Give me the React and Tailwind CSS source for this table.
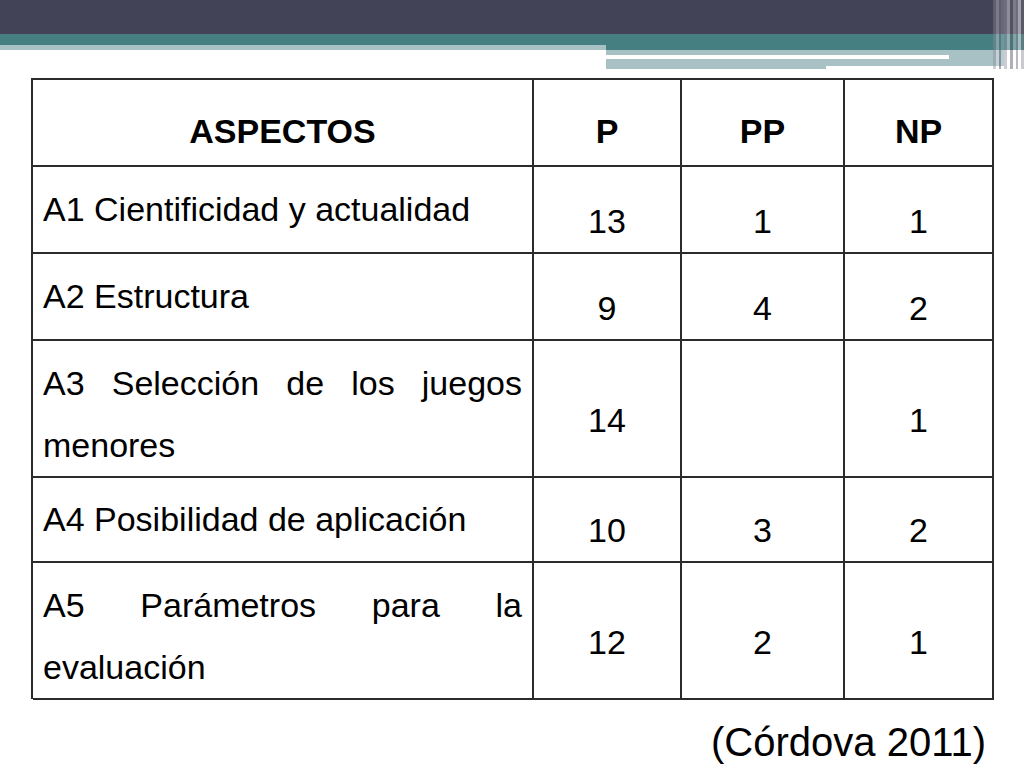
import React from 'react';

const rows = [
  { aspect: 'A1 Cientificidad y actualidad', p: '13', pp: '1', np: '1', h: 'h-[87px]' },
  { aspect: 'A2 Estructura', p: '9', pp: '4', np: '2', h: 'h-[87px]' },
  { aspect: 'A3 Selección de los juegos menores', p: '14', pp: '', np: '1', h: 'h-[136px]' },
  { aspect: 'A4 Posibilidad de aplicación', p: '10', pp: '3', np: '2', h: 'h-[86px]' },
  { aspect: 'A5 Parámetros para la evaluación', p: '12', pp: '2', np: '1', h: 'h-[136px]' },
];

const stripes = [
  'bg-[#8a8a98]/40',
  'bg-white/30',
  'bg-[#6f6f80]/60',
  'bg-white/20',
  'bg-[#9a9aa8]/50',
  'bg-white/40',
  'bg-[#5f5f70]/50',
  'bg-white/30',
  'bg-[#8a8a98]/60',
  'bg-white/50',
  'bg-[#7a7a88]/40',
];

const Header = () => (
  <div className="relative flex h-[69px]">
    {/* left part of the band */}
    <div className="flex w-[606px] flex-col">
      <div className="h-[34px] bg-[#434357]" />
      <div className="h-[11px] bg-[#467f81]" />
      <div className="h-[5px] bg-[#a7c1c4]" />
    </div>
    {/* right part, runs lower */}
    <div className="flex flex-1 flex-col pr-[20px] [&>*]:shrink-0">
      <div className="-mr-[20px] h-[34px] bg-[#434357]" />
      <div className="-mr-[20px] h-[16px] bg-[#467f81]" />
      <div className="h-[5px] bg-[#a7c1c4]" />
      <div className="flex h-[4px]">
        <div className="w-[343px] bg-white" />
        <div className="flex-1 bg-[#a7c1c4]" />
      </div>
      <div className="h-[7px] bg-[#a7c1c4]" />
      <div className="flex h-[3px]">
        <div className="w-[220px] bg-[#a7c1c4]" />
        <div className="flex-1 bg-white" />
      </div>
    </div>
    {/* vertical stripes on the right edge */}
    <div className="absolute right-0 top-0 flex h-[69px] w-[31px]">
      {stripes.map((c, i) => (
        <div key={i} className={`h-full flex-1 ${c}`} />
      ))}
    </div>
  </div>
);

const NumCell = ({ children, last }) => (
  <div
    className={`flex items-center justify-center border-b-2 border-r-2 border-[#2b2b2b] pt-[22px] text-[34px] leading-none`}
  >
    {children}
  </div>
);

export default function App() {
  return (
    <div
      className="h-[768px] w-[1024px] overflow-hidden bg-white text-black"
      style={{ fontFamily: '"Liberation Sans", Arial, sans-serif' }}
    >
      <Header />

      {/* Table */}
      <div className="ml-[31px] mt-[9px] w-[963px] border-l-2 border-t-2 border-[#2b2b2b]">
        <div className="grid h-[87px] grid-cols-[501px_148px_163px_149px]">
          {['ASPECTOS', 'P', 'PP', 'NP'].map((t) => (
            <div
              key={t}
              className="flex items-center justify-center border-b-2 border-r-2 border-[#2b2b2b] pt-[17px] text-[34px] font-bold leading-none"
            >
              {t}
            </div>
          ))}
        </div>
        {rows.map((r) => (
          <div key={r.aspect} className={`grid grid-cols-[501px_148px_163px_149px] ${r.h}`}>
            <div className="border-b-2 border-r-2 border-[#2b2b2b] px-[10px] pt-[11px] text-justify text-[34px] leading-[62px]">
              {r.aspect}
            </div>
            <NumCell>{r.p}</NumCell>
            <NumCell>{r.pp}</NumCell>
            <NumCell>{r.np}</NumCell>
          </div>
        ))}
      </div>

      <p className="mt-[23px] pr-[38px] text-right text-[40px] leading-none">(Córdova 2011)</p>
    </div>
  );
}
